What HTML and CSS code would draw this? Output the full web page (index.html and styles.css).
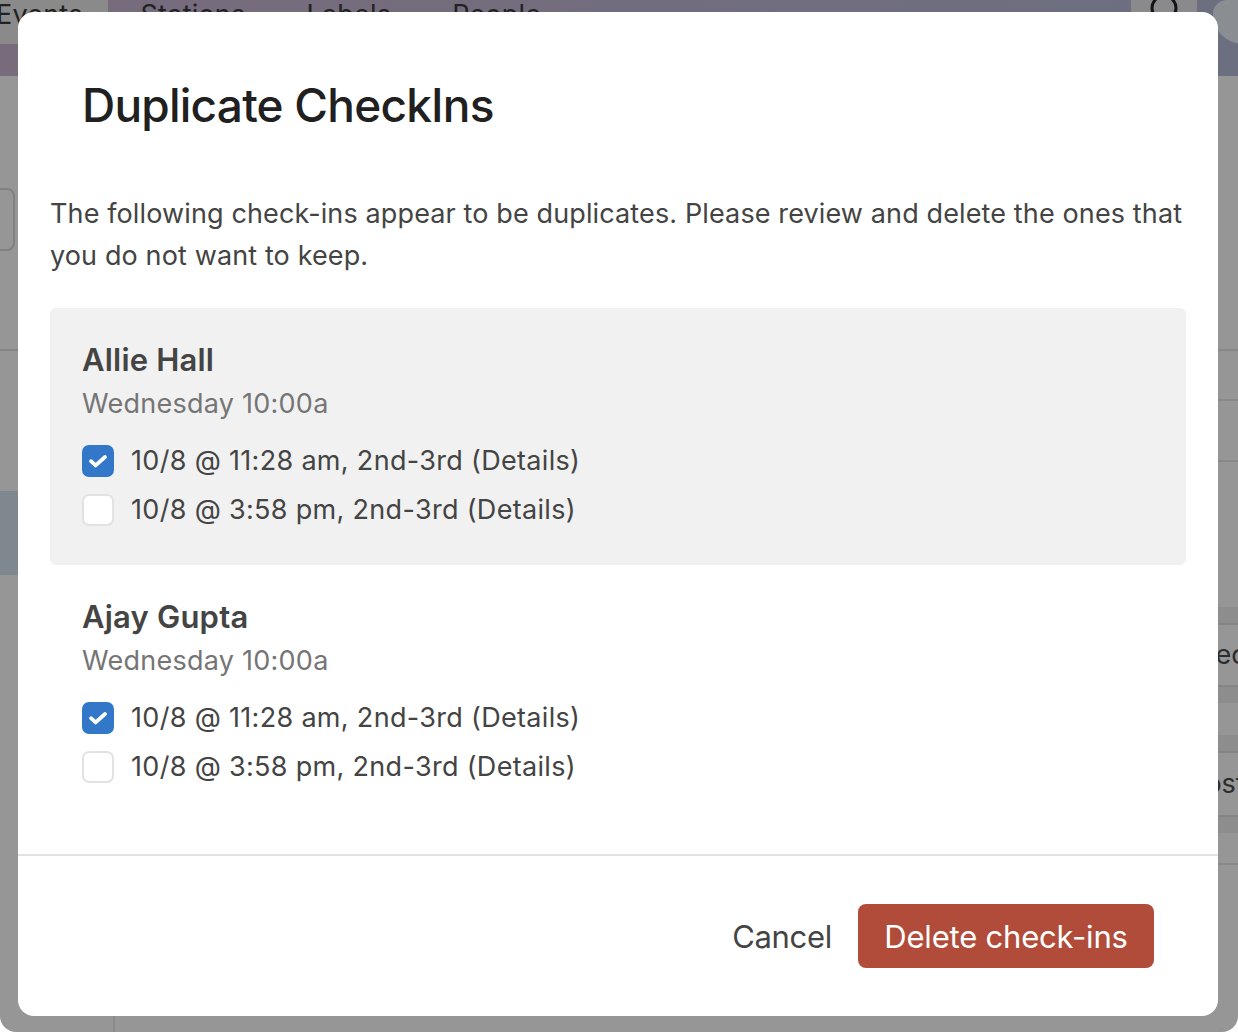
FILE: index.html
```html
<!DOCTYPE html>
<html lang="en">
<head>
  <meta charset="UTF-8" />
  <title>Duplicate CheckIns</title>
  <link rel="stylesheet" href="styles.css">
</head>
<body>

  <!-- Page behind the modal -->
  <div class="page">
    <div class="topbar">
      <nav class="nav">
        <span class="nav-item nav-active">Events</span>
        <span class="nav-item">Stations</span>
        <span class="nav-item">Labels</span>
        <span class="nav-item">People</span>
      </nav>
      <div class="search">
        <svg width="36" height="36" viewBox="0 0 36 36" fill="none" stroke="#141414" stroke-width="3">
          <circle cx="18" cy="8" r="12" />
        </svg>
      </div>
      <div class="avatar"></div>
    </div>
    <div class="content">
      <div class="sidebar">
        <div class="side-top">
          <div class="side-box"></div>
        </div>
        <div class="side-band"></div>
      </div>
      <div class="list">
        <div class="list-head"></div>
        <div class="list-line list-line-a"></div>
        <div class="list-line list-line-b"></div>
        <div class="list-gap"></div>
        <div class="list-band"></div>
        <div class="list-row">Selected</div>
        <div class="list-band list-band-plain"></div>
        <div class="list-spacer"></div>
        <div class="list-band"></div>
        <div class="list-row list-row-second">Most</div>
        <div class="list-band list-band-plain"></div>
        <div class="list-line list-line-c"></div>
      </div>
    </div>
  </div>

  <!-- Modal -->
  <div class="modal">
    <h1 class="modal-title">Duplicate CheckIns</h1>
    <div class="modal-body">
      <p class="intro">The following check-ins appear to be duplicates. Please review and delete the ones that you do not want to keep.</p>

      <div class="group group-alt">
        <div class="group-name">Allie Hall</div>
        <div class="group-time">Wednesday 10:00a</div>
        <label class="check-row">
          <span class="box box-on">
            <svg width="20" height="16" viewBox="0 0 20 16" fill="none" stroke="#fff" stroke-width="3.8" stroke-linecap="round" stroke-linejoin="round"><path d="M3 8.2l4.6 4.2L17 4" /></svg>
          </span>
          10/8 @ 11:28 am, 2nd-3rd (Details)
        </label>
        <label class="check-row">
          <span class="box"></span>
          10/8 @ 3:58 pm, 2nd-3rd (Details)
        </label>
      </div>

      <div class="group">
        <div class="group-name">Ajay Gupta</div>
        <div class="group-time">Wednesday 10:00a</div>
        <label class="check-row">
          <span class="box box-on">
            <svg width="20" height="16" viewBox="0 0 20 16" fill="none" stroke="#fff" stroke-width="3.8" stroke-linecap="round" stroke-linejoin="round"><path d="M3 8.2l4.6 4.2L17 4" /></svg>
          </span>
          10/8 @ 11:28 am, 2nd-3rd (Details)
        </label>
        <label class="check-row">
          <span class="box"></span>
          10/8 @ 3:58 pm, 2nd-3rd (Details)
        </label>
      </div>
    </div>
    <div class="modal-footer">
      <span class="cancel">Cancel</span>
      <button class="delete-btn">Delete check-ins</button>
    </div>
  </div>

</body>
</html>
```

FILE: styles.css
```css
html, body {
  margin: 0;
  padding: 0;
  height: 100%;
  overflow: hidden;
  background: #fff;
  font-family: Inter, "Liberation Sans", sans-serif;
}

/* Page behind the modal */
.page {
  height: 1032px;
  background: #969696;
  border-radius: 0 0 16px 16px;
  overflow: hidden;
  display: flex;
  flex-direction: column;
}
.topbar {
  height: 76px;
  box-sizing: border-box;
  background: linear-gradient(90deg, #786b7c, #6c6f80);
  display: flex;
  align-items: flex-start;
  overflow: hidden;
}
.nav {
  display: flex;
  flex: 1;
  gap: 1px;
  margin-left: -34px;
  height: 44px;
  font-size: 27px;
  letter-spacing: 0.2px;
  color: #222;
}
.nav-item {
  padding: 0 30px;
  line-height: 30px;
  height: 44px;
}
.nav-active {
  padding-right: 25px;
  margin-right: 2px;
  background: #8a8a8a;
  border-radius: 0 0 30px 0;
}
.search {
  width: 66px;
  height: 44px;
  background: #8a8a8c;
  border-radius: 0 0 33px 33px;
  display: flex;
  justify-content: center;
  flex: none;
}
.avatar {
  width: 44px;
  height: 44px;
  margin-left: 16px;
  margin-right: -19px;
  background: #8a8d92;
  border-radius: 14px 0 0 30px;
  flex: none;
}
.content {
  flex: 1;
  display: flex;
}
.sidebar {
  width: 113px;
  flex: none;
  border-right: 2px solid #8b8b8b;
}
.side-top {
  height: 275px;
  box-sizing: border-box;
  padding-top: 112px;
  border-bottom: 2px solid #858585;
}
.side-box {
  width: 30px;
  height: 59px;
  margin-left: -19px;
  border: 2px solid #808080;
  border-radius: 8px;
}
.side-band {
  margin-top: 140px;
  height: 84px;
  background: #7f888f;
}
.list {
  flex: 1;
  overflow: hidden;
}
.list-head {
  height: 275px;
  box-sizing: border-box;
  border-bottom: 2px solid #888;
}
.list-line {
  box-sizing: border-box;
  border-bottom: 2px solid #888;
}
.list-line-a { height: 50px; }
.list-line-b { height: 61px; }
.list-gap { height: 145px; }
.list-band {
  height: 18px;
  box-sizing: border-box;
  background: #8d8d8d;
  border-bottom: 2px solid #858585;
}
.list-band-plain {
  border-bottom: 0;
  border-top: 2px solid #858585;
}
.list-row {
  height: 60px;
  line-height: 60px;
  font-size: 27px;
  color: #2c2c2c;
  white-space: nowrap;
  margin-left: 1061px;
}
.list-row-second {
  height: 62px;
  line-height: 62px;
  margin-left: 1066px;
}
.list-spacer { height: 32px; }
.list-line-c { height: 32px; }

/* Modal */
.modal {
  position: absolute;
  left: 18px;
  top: 12px;
  width: 1200px;
  height: 1004px;
  background: #fff;
  border-radius: 16px;
  display: flex;
  flex-direction: column;
  overflow: hidden;
}
.modal-title {
  margin: 0;
  padding: 62px 64px 0;
  height: 110px;
  box-sizing: border-box;
  font-size: 46px;
  line-height: 62px;
  font-weight: 500;
  color: #202020;
  letter-spacing: -0.78px;
}
.modal-body {
  flex: 1;
  padding: 0 32px;
}
.intro {
  margin: 0 0 31px;
  padding-top: 71px;
  font-size: 27px;
  line-height: 42px;
  letter-spacing: 0.125px;
  color: #444;
}
.group {
  box-sizing: border-box;
  height: 257px;
  padding: 32px 32px 0;
  border-radius: 6px;
  color: #444;
}
.group-alt {
  background: #f1f1f1;
}
.group-name {
  font-size: 31px;
  line-height: 40px;
  font-weight: 600;
  letter-spacing: 0.2px;
}
.group-time {
  font-size: 27px;
  line-height: 48px;
  letter-spacing: 0.25px;
  color: #757575;
  margin-bottom: 8px;
}
.check-row {
  display: flex;
  align-items: center;
  gap: 17px;
  height: 49px;
  font-size: 27px;
  letter-spacing: 0.32px;
  color: #444;
}
.box {
  width: 32px;
  height: 32px;
  box-sizing: border-box;
  border: 2px solid #e2e2e2;
  border-radius: 7px;
  background: #fff;
  display: flex;
  align-items: center;
  justify-content: center;
  flex: none;
}
.box-on {
  background: #3378c8;
  border-color: #3378c8;
}
.modal-footer {
  height: 162px;
  box-sizing: border-box;
  border-top: 2px solid #e2e2e2;
  padding: 48px 64px 0 0;
  display: flex;
  justify-content: flex-end;
  align-items: flex-start;
  gap: 26px;
}
.cancel {
  font-size: 31px;
  line-height: 66px;
  letter-spacing: -0.3px;
  color: #444;
}
.delete-btn {
  width: 296px;
  height: 64px;
  border: none;
  border-radius: 8px;
  background: #b04c39;
  color: #fff;
  font-family: inherit;
  font-size: 31px;
  letter-spacing: -0.2px;
}
```
